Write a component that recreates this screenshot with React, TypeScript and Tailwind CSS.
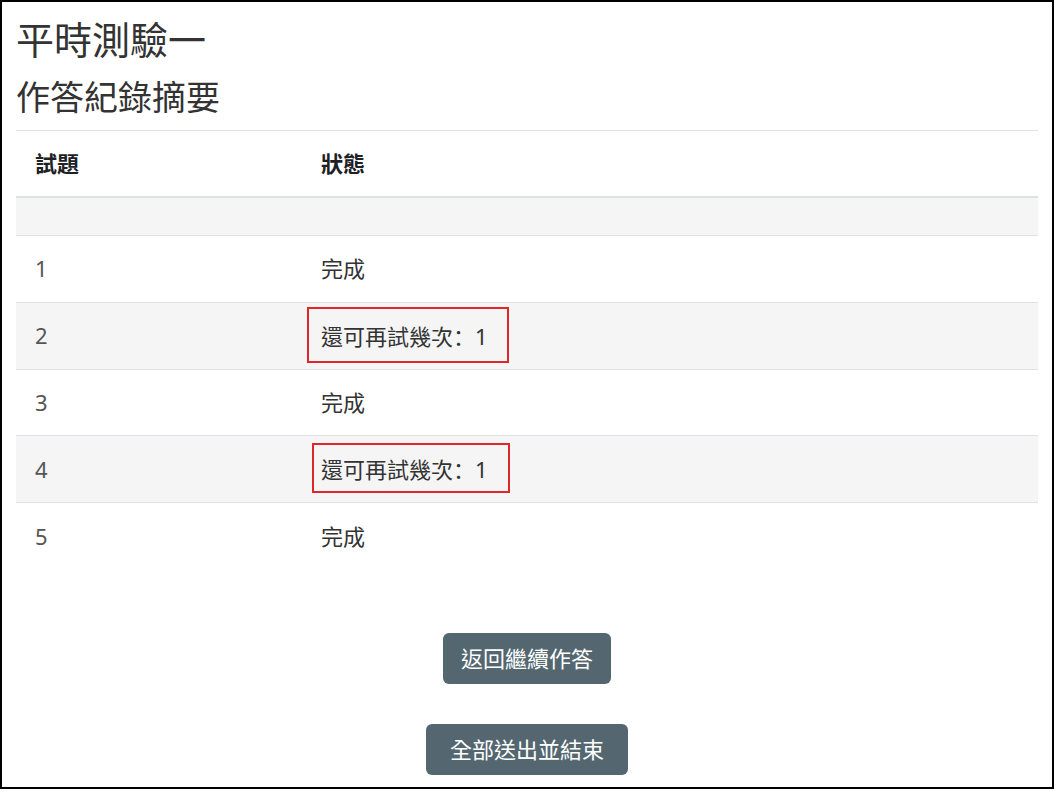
import React from 'react';

const rows = [
  { n: '1', status: '完成', retry: false },
  { n: '2', status: '還可再試幾次', retry: true },
  { n: '3', status: '完成', retry: false },
  { n: '4', status: '還可再試幾次', retry: true },
  { n: '5', status: '完成', retry: false },
];

export default function App() {
  return (
    <div
      className="h-[789px] border-2 border-black bg-white text-[#373a3c] overflow-hidden"
      style={{ fontFamily: '"Noto Sans", "Noto Sans CJK TC", sans-serif' }}
    >
      <div className="px-[14px]">
        <h2 className="text-[38px] leading-none pt-[18px] text-[#333]">平時測驗一</h2>
        <h3 className="text-[34px] leading-none mt-[22px] text-[#333]">作答紀錄摘要</h3>

        <table className="w-full mt-[16px] border-t border-[#dee2e6] text-[22px]">
          <thead>
            <tr className="border-b-2 border-[#dee2e6]">
              <th className="text-left font-bold pl-[19px] h-[66px] w-[286px] text-[#1d2125]">試題</th>
              <th className="text-left font-bold pl-[19px] text-[#1d2125]">狀態</th>
            </tr>
          </thead>
          <tbody>
            <tr className="bg-[#f5f5f5] border-b border-[#dee2e6]">
              <td className="h-[39px]" />
              <td />
            </tr>
            {rows.map((r, i) => (
              <tr
                key={r.n}
                className={`${i % 2 === 1 ? 'bg-[#f5f5f5]' : 'bg-white'} ${i < rows.length - 1 ? 'border-b border-[#dee2e6]' : ''}`}
              >
                <td className="h-[66.75px] pl-[19px] text-[#555]">{r.n}</td>
                <td className="pl-[19px] text-[#333]">
                  <span className="relative">
                    {r.status}
                    {r.retry && (
                      <>
                        <span style={{ fontFamily: '"Noto Sans CJK SC", sans-serif' }}>：</span>
                        <span>1</span>
                        <span
                          className={`absolute border-2 border-[#e0262b] ${
                            i === 1
                              ? '-left-[14px] -right-[21px] -top-[14px] -bottom-[12px]'
                              : '-left-[9px] -right-[22px] -top-[11px] -bottom-[9px]'
                          }`}
                        />
                      </>
                    )}
                  </span>
                </td>
              </tr>
            ))}
          </tbody>
        </table>
      </div>

      <div className="flex flex-col items-center mt-[64px] gap-[40px]">
        <button className="bg-[#546770] text-white text-[22px] rounded-md h-[51px] px-[18px]">
          返回繼續作答
        </button>
        <button className="bg-[#546770] text-white text-[22px] rounded-md h-[51px] px-[24px]">
          全部送出並結束
        </button>
      </div>
    </div>
  );
}
